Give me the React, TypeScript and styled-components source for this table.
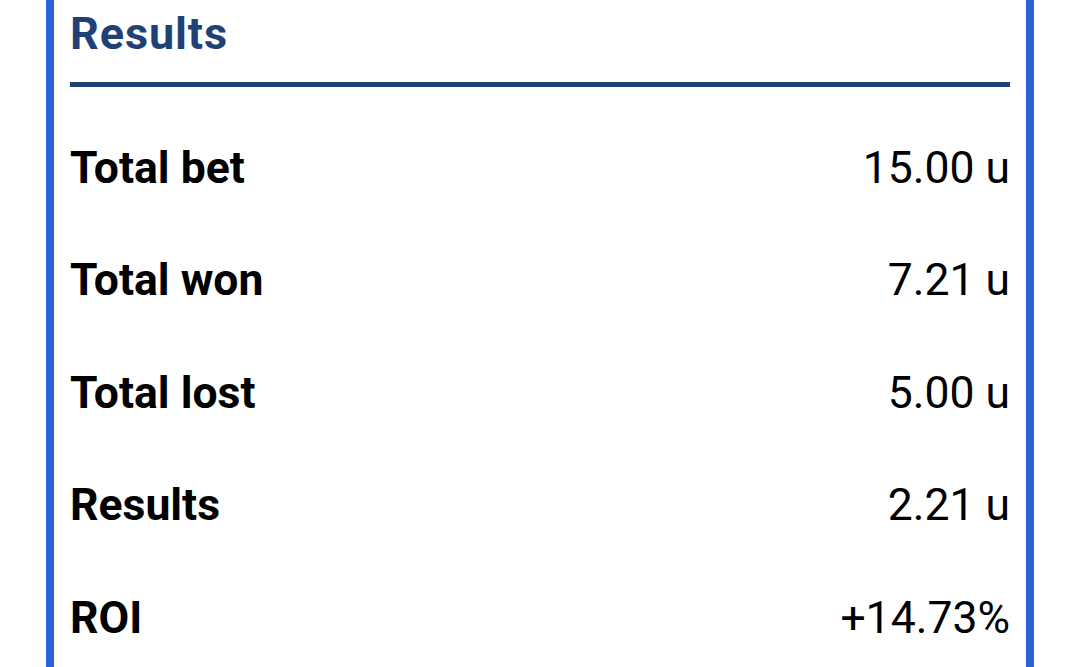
import React from 'react';
import styled, { createGlobalStyle } from 'styled-components';

const GlobalStyle = createGlobalStyle`
  html, body {
    margin: 0;
    padding: 0;
    background: #ffffff;
    font-family: Roboto, "Liberation Sans", sans-serif;
  }
`;

type Row = { label: string; value: string };

const rows: Row[] = [
  { label: 'Total bet', value: '15.00 u' },
  { label: 'Total won', value: '7.21 u' },
  { label: 'Total lost', value: '5.00 u' },
  { label: 'Results', value: '2.21 u' },
  { label: 'ROI', value: '+14.73%' },
];

export default function App() {
  return (
    <>
      <GlobalStyle />
      <StyledPanel>
        <StyledTitle>Results</StyledTitle>
        <StyledList>
          {rows.map((r) => (
            <StyledRow key={r.label}>
              <StyledLabel>{r.label}</StyledLabel>
              <StyledValue>{r.value}</StyledValue>
            </StyledRow>
          ))}
        </StyledList>
      </StyledPanel>
    </>
  );
}

const StyledPanel = styled.div`
  margin-left: 46px;
  width: 988px;
  height: 667px;
  box-sizing: border-box;
  border-left: 8px solid #2962d4;
  border-right: 8px solid #2962d4;
  padding: 6px 16px 0;
  overflow: hidden;
`;

const StyledTitle = styled.h2`
  margin: 0;
  font-size: 45px;
  line-height: 56px;
  font-weight: 700;
  letter-spacing: 0.9px;
  color: #1f4175;
  padding-bottom: 20px;
  border-bottom: 5px solid #1f4175;
`;

const StyledList = styled.div`
  margin-top: 24.5px;
  display: flex;
  flex-direction: column;
`;

const StyledRow = styled.div`
  display: flex;
  justify-content: space-between;
  align-items: center;
  height: 112.5px;
  font-size: 44.5px;
  line-height: 112.5px;
  color: #000;
`;

const StyledLabel = styled.span`
  font-weight: 700;
`;

const StyledValue = styled.span`
  font-weight: 400;
`;
